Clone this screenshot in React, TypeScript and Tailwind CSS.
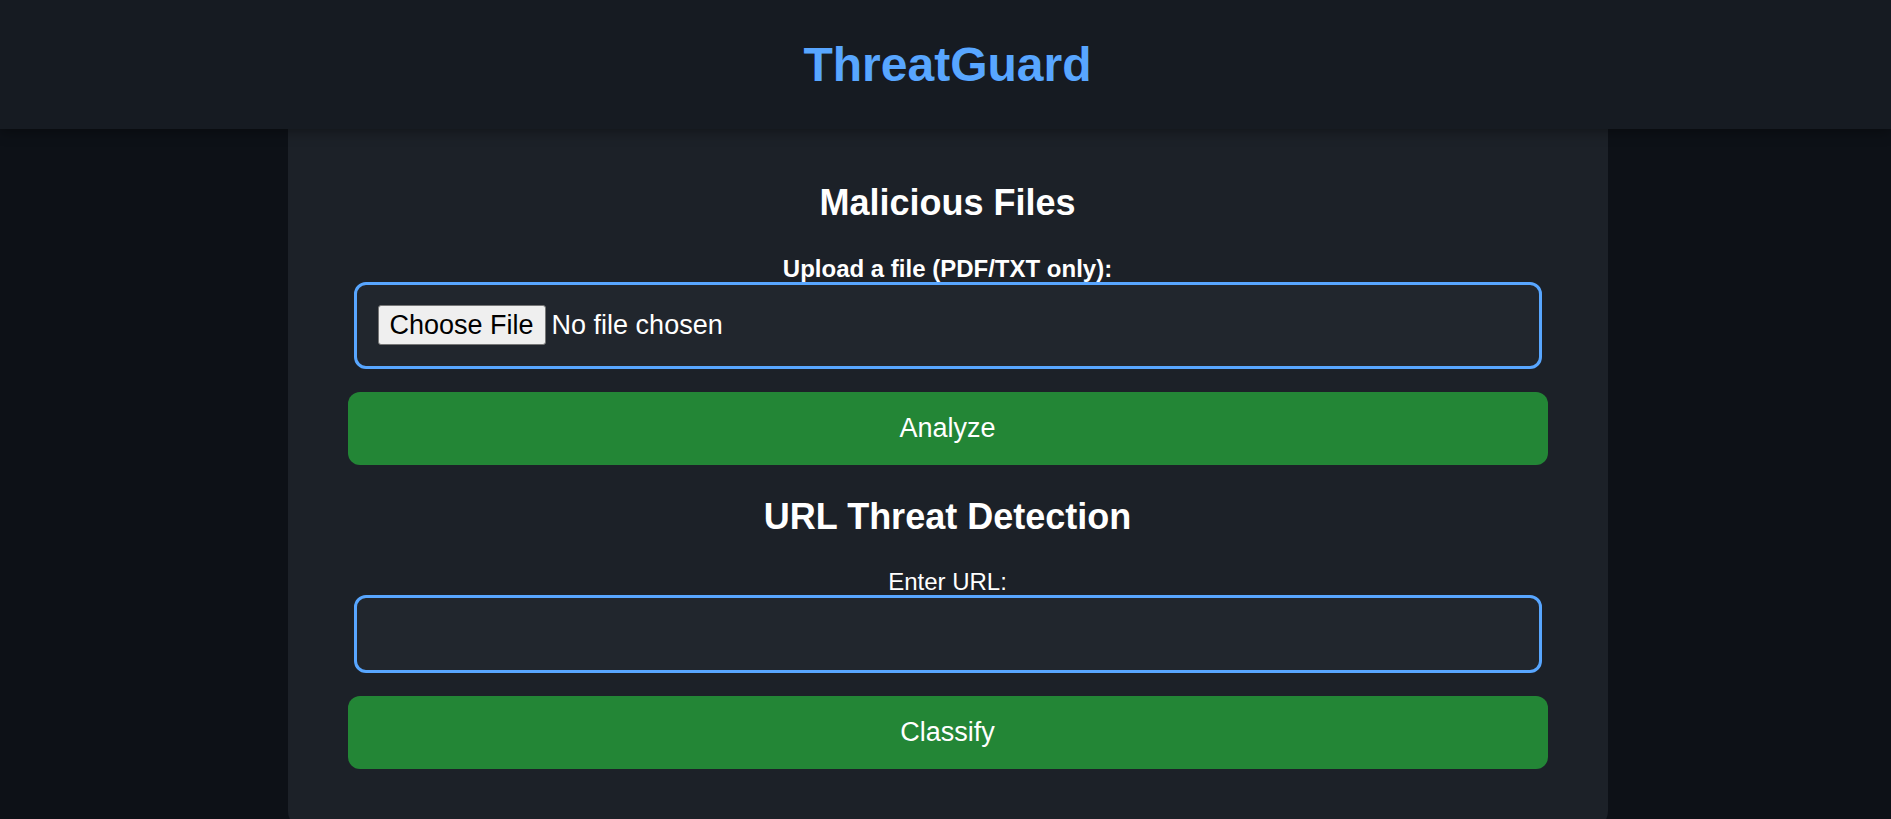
import React from 'react';

const App: React.FC = () => {
  return (
    <div
      className="h-screen overflow-hidden bg-[#0d1117] text-white"
      style={{ fontFamily: '"Liberation Sans", Arial, sans-serif' }}
    >
      {/* Header */}
      <header className="relative z-10 flex h-[129px] items-center justify-center bg-[#161b22] pl-[4px] shadow-[0_3px_12px_rgba(0,0,0,0.35)]">
        <h1 className="text-[48px] font-bold leading-[55px] text-[#58a6ff]">ThreatGuard</h1>
      </header>

      {/* Card */}
      <div className="flex justify-center pl-[4px]">
        <main className="w-[1320px] rounded-b-[18px] bg-[#1c2128] px-[60px] pt-[53px] pb-[60px]">
          {/* Malicious files */}
          <section className="flex flex-col">
            <h2 className="text-center text-[36px] font-bold leading-[41px]">Malicious Files</h2>
            <label
              htmlFor="file-input"
              className="mt-[32px] block text-center text-[24px] font-bold leading-[27px]"
            >
              Upload a file (PDF/TXT only):
            </label>
            <input
              id="file-input"
              type="file"
              accept=".pdf,.txt"
              className="mx-[6px] rounded-[12px] border-[3px] border-[#58a6ff] bg-[#21262d] px-[21px] pt-[20px] pb-[21px] text-[27px] leading-[31px] text-white outline-none file:mr-[6px] file:h-[40px] file:rounded-[3px] file:border file:border-solid file:border-[#767676] file:bg-[#efefef] file:px-[11px] file:text-black"
            />
            <button className="mt-[23px] h-[73px] w-full rounded-[12px] bg-[#238636] text-[27px] leading-[31px] text-white">
              Analyze
            </button>
          </section>

          {/* URL detection */}
          <section className="mt-[31px] flex flex-col">
            <h2 className="text-center text-[36px] font-bold leading-[41px]">URL Threat Detection</h2>
            <label htmlFor="url-input" className="mt-[31px] block text-center text-[24px] leading-[27px]">
              Enter URL:
            </label>
            <input
              id="url-input"
              type="text"
              className="mx-[6px] h-[78px] rounded-[12px] border-[3px] border-[#58a6ff] bg-[#21262d] px-[20px] text-[27px] leading-[31px] text-white outline-none"
            />
            <button className="mt-[23px] h-[73px] w-full rounded-[12px] bg-[#238636] text-[27px] leading-[31px] text-white">
              Classify
            </button>
          </section>
        </main>
      </div>
    </div>
  );
};

export default App;
